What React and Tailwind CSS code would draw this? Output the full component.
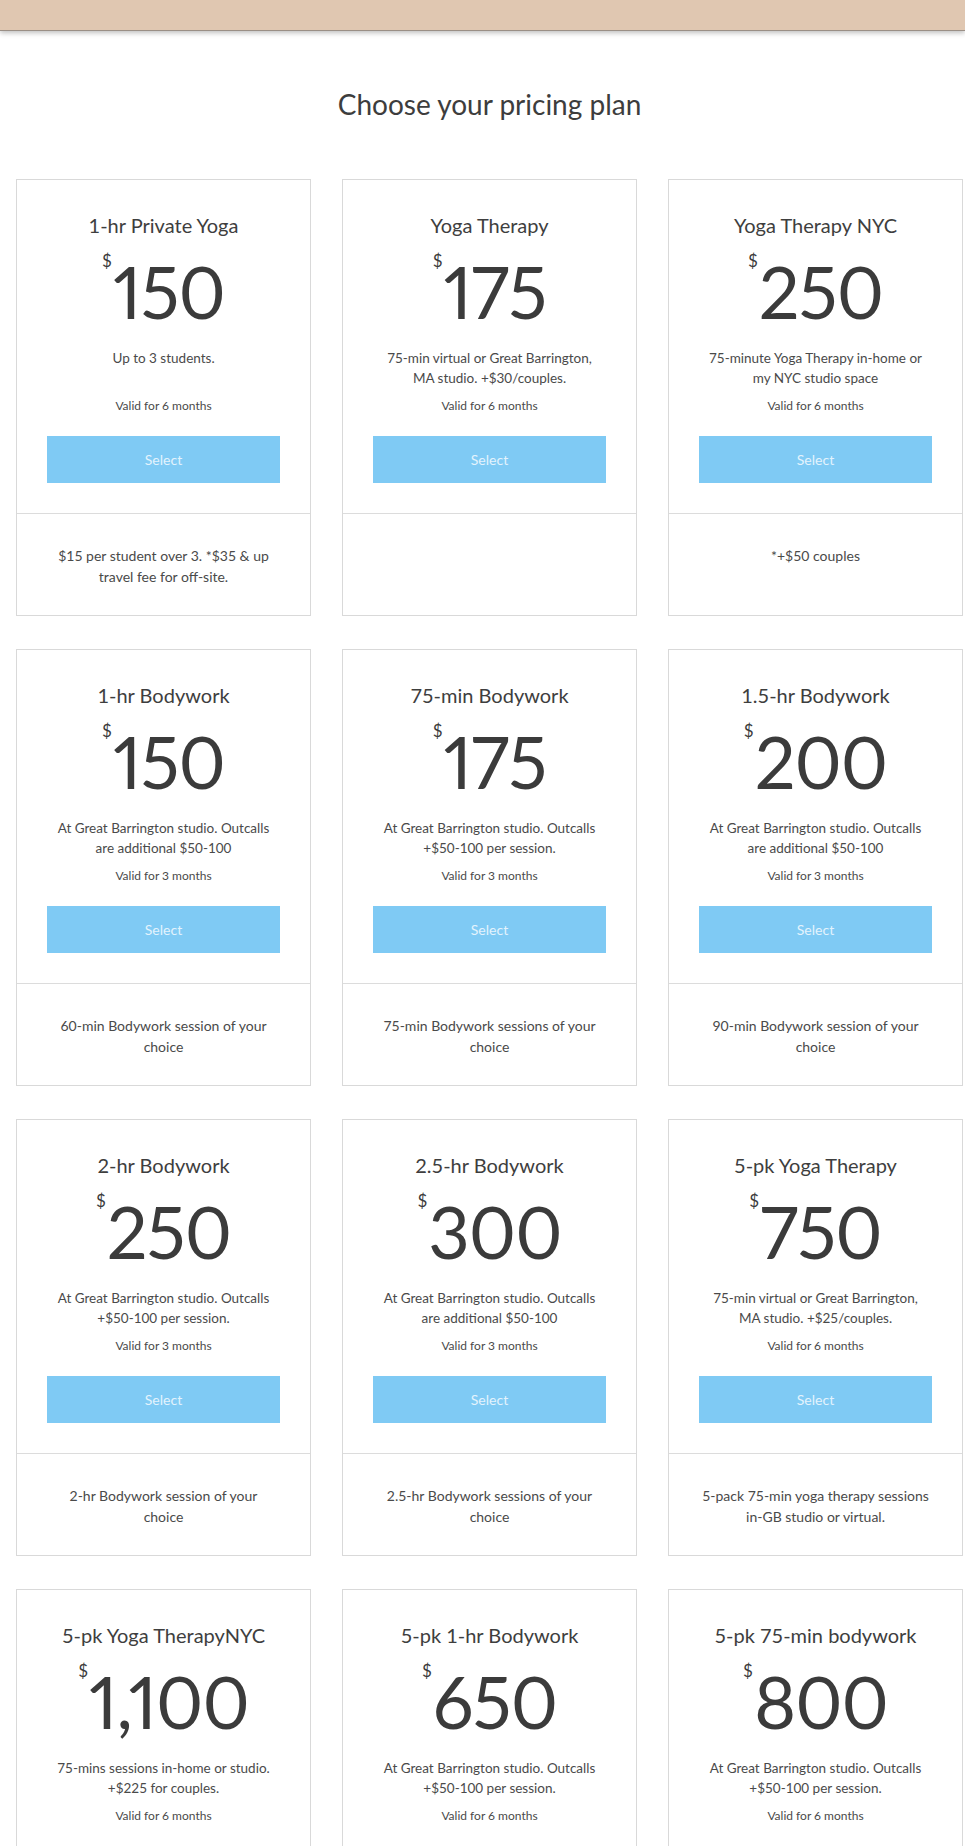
import React from "react";

const plans = [
  { t: "1-hr Private Yoga", p: "150", d: ["Up to 3 students."], v: "Valid for 6 months", f: ["$15 per student over 3. *$35 & up", "travel fee for off-site."] },
  { t: "Yoga Therapy", p: "175", d: ["75-min virtual or Great Barrington,", "MA studio. +$30/couples."], v: "Valid for 6 months", f: [] },
  { t: "Yoga Therapy NYC", p: "250", d: ["75-minute Yoga Therapy in-home or", "my NYC studio space"], v: "Valid for 6 months", f: ["*+$50 couples"] },
  { t: "1-hr Bodywork", p: "150", d: ["At Great Barrington studio. Outcalls", "are additional $50-100"], v: "Valid for 3 months", f: ["60-min Bodywork session of your", "choice"] },
  { t: "75-min Bodywork", p: "175", d: ["At Great Barrington studio. Outcalls", "+$50-100 per session."], v: "Valid for 3 months", f: ["75-min Bodywork sessions of your", "choice"] },
  { t: "1.5-hr Bodywork", p: "200", d: ["At Great Barrington studio. Outcalls", "are additional $50-100"], v: "Valid for 3 months", f: ["90-min Bodywork session of your", "choice"] },
  { t: "2-hr Bodywork", p: "250", d: ["At Great Barrington studio. Outcalls", "+$50-100 per session."], v: "Valid for 3 months", f: ["2-hr Bodywork session of your", "choice"] },
  { t: "2.5-hr Bodywork", p: "300", d: ["At Great Barrington studio. Outcalls", "are additional $50-100"], v: "Valid for 3 months", f: ["2.5-hr Bodywork sessions of your", "choice"] },
  { t: "5-pk Yoga Therapy", p: "750", d: ["75-min virtual or Great Barrington,", "MA studio. +$25/couples."], v: "Valid for 6 months", f: ["5-pack 75-min yoga therapy sessions", "in-GB studio or virtual."] },
  { t: "5-pk Yoga TherapyNYC", p: "1,100", d: ["75-mins sessions in-home or studio.", "+$225 for couples."], v: "Valid for 6 months", f: [] },
  { t: "5-pk 1-hr Bodywork", p: "650", d: ["At Great Barrington studio. Outcalls", "+$50-100 per session."], v: "Valid for 6 months", f: [] },
  { t: "5-pk 75-min bodywork", p: "800", d: ["At Great Barrington studio. Outcalls", "+$50-100 per session."], v: "Valid for 6 months", f: [] },
];

function Card({ plan }) {
  return (
    <div className="w-[295px] h-[437px] border border-[#d9d9d9] bg-white flex flex-col">
      <div className="h-[334px] flex flex-col items-center border-b border-[#dcdcdc]">
        <h2 className="mt-[33px] h-[24px] text-[20px] leading-[24px] text-[#3e3e3e]">{plan.t}</h2>
        <div className="mt-[19px] h-[70px] flex items-start text-[#3b3b3b]">
          <span className="text-[17px] leading-[18px] -mt-[4px] mr-[1px]">$</span>
          <span className="text-[72px] leading-[70px] tracking-[-1px] proportional-nums">{plan.p}</span>
        </div>
        <div className="mt-[22px] h-[40px] text-[13.5px] leading-[20px] text-[#4a4a4a] text-center">
          {plan.d.map((l, i) => (
            <div key={i}>{l}</div>
          ))}
        </div>
        <div className="mt-[10px] text-[12px] leading-[16px] text-[#4a4a4a]">{plan.v}</div>
        <button className="mt-[22px] w-[233px] h-[47px] bg-[#7fcaf4] text-[14px] text-[#e3f3fd]">Select</button>
      </div>
      <div className="flex-1 pt-[31px] text-[14px] leading-[21px] text-[#4a4a4a] text-center">
        {plan.f.map((l, i) => (
          <div key={i}>{l}</div>
        ))}
      </div>
    </div>
  );
}

export default function App() {
  return (
    <div className="w-[965px] h-[1846px] overflow-hidden bg-white" style={{ fontFamily: "Lato, 'Open Sans', sans-serif" }}>
      <div className="h-[31px] bg-[#e0c7b1] border-b border-[#9a8f86] shadow-[0_2px_5px_rgba(0,0,0,0.25)]" />
      <div className="pl-[16px]">
        <div className="w-[947px]">
          <h1 className="mt-[57px] text-center text-[28px] leading-[32px] text-[#3d3d3d]">Choose your pricing plan</h1>
          <div className="mt-[59px] grid grid-cols-[295px_295px_295px] gap-x-[31px] gap-y-[33px]">
            {plans.map((p, i) => (
              <Card key={i} plan={p} />
            ))}
          </div>
        </div>
      </div>
    </div>
  );
}
